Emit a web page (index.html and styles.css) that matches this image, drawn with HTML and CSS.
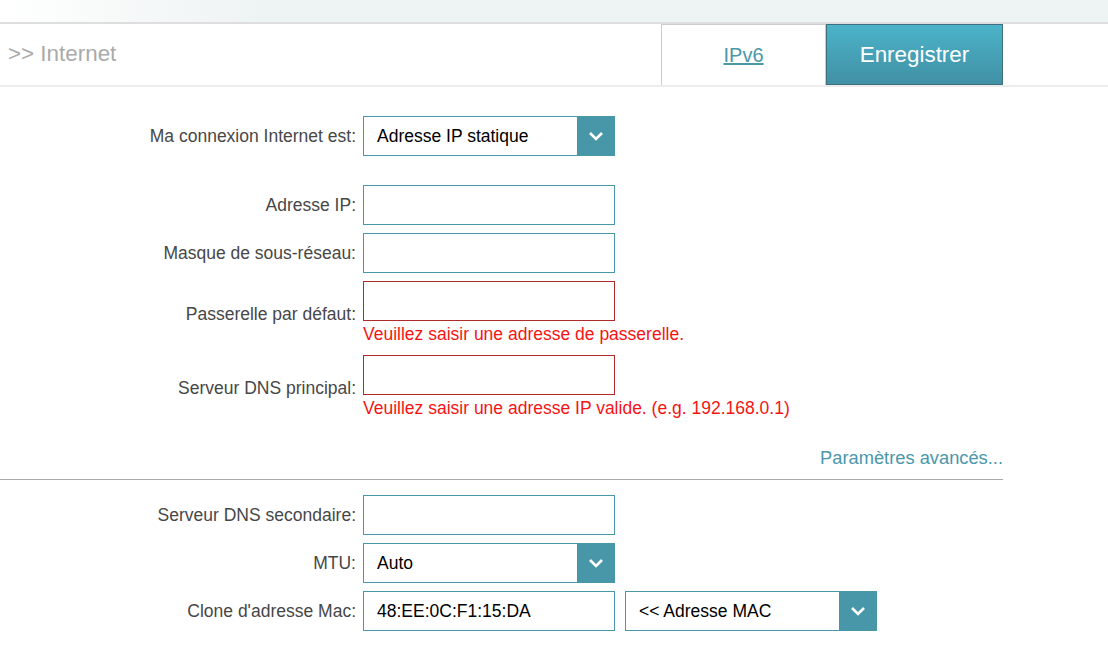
FILE: index.html
```html
<!DOCTYPE html>
<html lang="fr">
<head>
    <meta charset="UTF-8">
    <title>Internet</title>
    <link rel="stylesheet" href="styles.css">
</head>
<body>
    <div class="top-band"></div>
    <div class="page-header">
        <div class="page-title">&gt;&gt; Internet</div>
        <div class="header-tabs">
            <a class="tab-link" href="#">IPv6</a>
            <button class="save-btn">Enregistrer</button>
        </div>
    </div>

    <div class="form-wrap">
        <div class="form-row first">
            <label>Ma connexion Internet est:</label>
            <div class="field">
                <div class="dropdown">
                    <span class="dropdown-value">Adresse IP statique</span>
                    <span class="dropdown-arrow"><svg width="16" height="10" viewBox="0 0 16 10"><polyline points="2,2 8,8 14,2" fill="none" stroke="#fff" stroke-width="2.6"/></svg></span>
                </div>
            </div>
        </div>

        <div class="form-row">
            <label>Adresse IP:</label>
            <div class="field"><input type="text"></div>
        </div>
        <div class="form-row">
            <label>Masque de sous-réseau:</label>
            <div class="field"><input type="text"></div>
        </div>
        <div class="form-row">
            <label>Passerelle par défaut:</label>
            <div class="field">
                <input type="text" class="invalid">
                <div class="error-msg">Veuillez saisir une adresse de passerelle.</div>
            </div>
        </div>
        <div class="form-row">
            <label>Serveur DNS principal:</label>
            <div class="field">
                <input type="text" class="invalid">
                <div class="error-msg">Veuillez saisir une adresse IP valide. (e.g. 192.168.0.1)</div>
            </div>
        </div>

        <div class="advanced">
            <a href="#">Paramètres avancés...</a>
        </div>

        <div class="form-row">
            <label>Serveur DNS secondaire:</label>
            <div class="field"><input type="text"></div>
        </div>
        <div class="form-row">
            <label>MTU:</label>
            <div class="field">
                <div class="dropdown">
                    <span class="dropdown-value">Auto</span>
                    <span class="dropdown-arrow"><svg width="16" height="10" viewBox="0 0 16 10"><polyline points="2,2 8,8 14,2" fill="none" stroke="#fff" stroke-width="2.6"/></svg></span>
                </div>
            </div>
        </div>
        <div class="form-row">
            <label>Clone d'adresse Mac:</label>
            <div class="field inline">
                <input type="text" value="48:EE:0C:F1:15:DA">
                <div class="dropdown">
                    <span class="dropdown-value">&lt;&lt; Adresse MAC</span>
                    <span class="dropdown-arrow"><svg width="16" height="10" viewBox="0 0 16 10"><polyline points="2,2 8,8 14,2" fill="none" stroke="#fff" stroke-width="2.6"/></svg></span>
                </div>
            </div>
        </div>
    </div>
</body>
</html>
```

FILE: styles.css
```css
body {
    margin: 0;
    font-family: "Liberation Sans", Arial, sans-serif;
    background: white;
    color: #444;
}
.top-band {
    height: 22px;
    background: linear-gradient(to right, #ffffff 0px, #eef3f3 260px);
    border-bottom: 2px solid #dedede;
}
.page-header {
    display: flex;
    justify-content: space-between;
    align-items: stretch;
    height: 61px;
    border-bottom: 2px solid #ececec;
}
.page-title {
    padding-left: 8px;
    font-size: 22.4px;
    color: #aaa;
    line-height: 60px;
}
.header-tabs {
    display: flex;
    margin-right: 105px;
}
.tab-link {
    width: 163px;
    border: 1px solid #ccc;
    border-bottom: none;
    text-align: center;
    line-height: 60px;
    font-size: 20px;
    color: #4a97a8;
}
.save-btn {
    width: 177px;
    border: 1px solid #3f6f7c;
    background: linear-gradient(to bottom, #4bb3c9, #4190a4);
    color: white;
    font-family: "Liberation Sans", Arial, sans-serif;
    font-size: 22.4px;
    padding: 0;
}
.form-wrap {
    width: 1003px;
    padding-top: 29px;
}
.form-row {
    display: flex;
    align-items: center;
    margin-bottom: 8px;
}
.form-row.first {
    margin-bottom: 29px;
}
.form-row label {
    width: 356px;
    padding-right: 7px;
    text-align: right;
    font-size: 17.5px;
    color: #474747;
}
.field.inline {
    display: flex;
    gap: 10px;
}
input {
    width: 252px;
    height: 40px;
    box-sizing: border-box;
    border: 1px solid #4a97a8;
    padding: 0 13px;
    font-family: "Liberation Sans", Arial, sans-serif;
    font-size: 17.5px;
    color: #000;
    display: block;
    margin: 0;
}
input.invalid {
    border-color: #b02a2a;
}
.error-msg {
    color: #f51414;
    font-size: 17.5px;
    line-height: 26px;
}
.dropdown {
    width: 252px;
    height: 40px;
    box-sizing: border-box;
    border: 1px solid #4a97a8;
    display: flex;
    align-items: stretch;
}
.dropdown-value {
    flex: 1;
    padding-left: 13px;
    line-height: 38px;
    font-size: 17.5px;
    color: #000;
}
.dropdown-arrow {
    width: 37px;
    background: #4797a9;
    display: flex;
    align-items: center;
    justify-content: center;
}
.advanced {
    text-align: right;
    margin-top: 26px;
    padding-bottom: 10px;
    border-bottom: 1px solid #a9a9a9;
    margin-bottom: 15px;
}
.advanced a {
    font-size: 18.3px;
    line-height: 22px;
    color: #4b97ab;
    text-decoration: none;
}
```
